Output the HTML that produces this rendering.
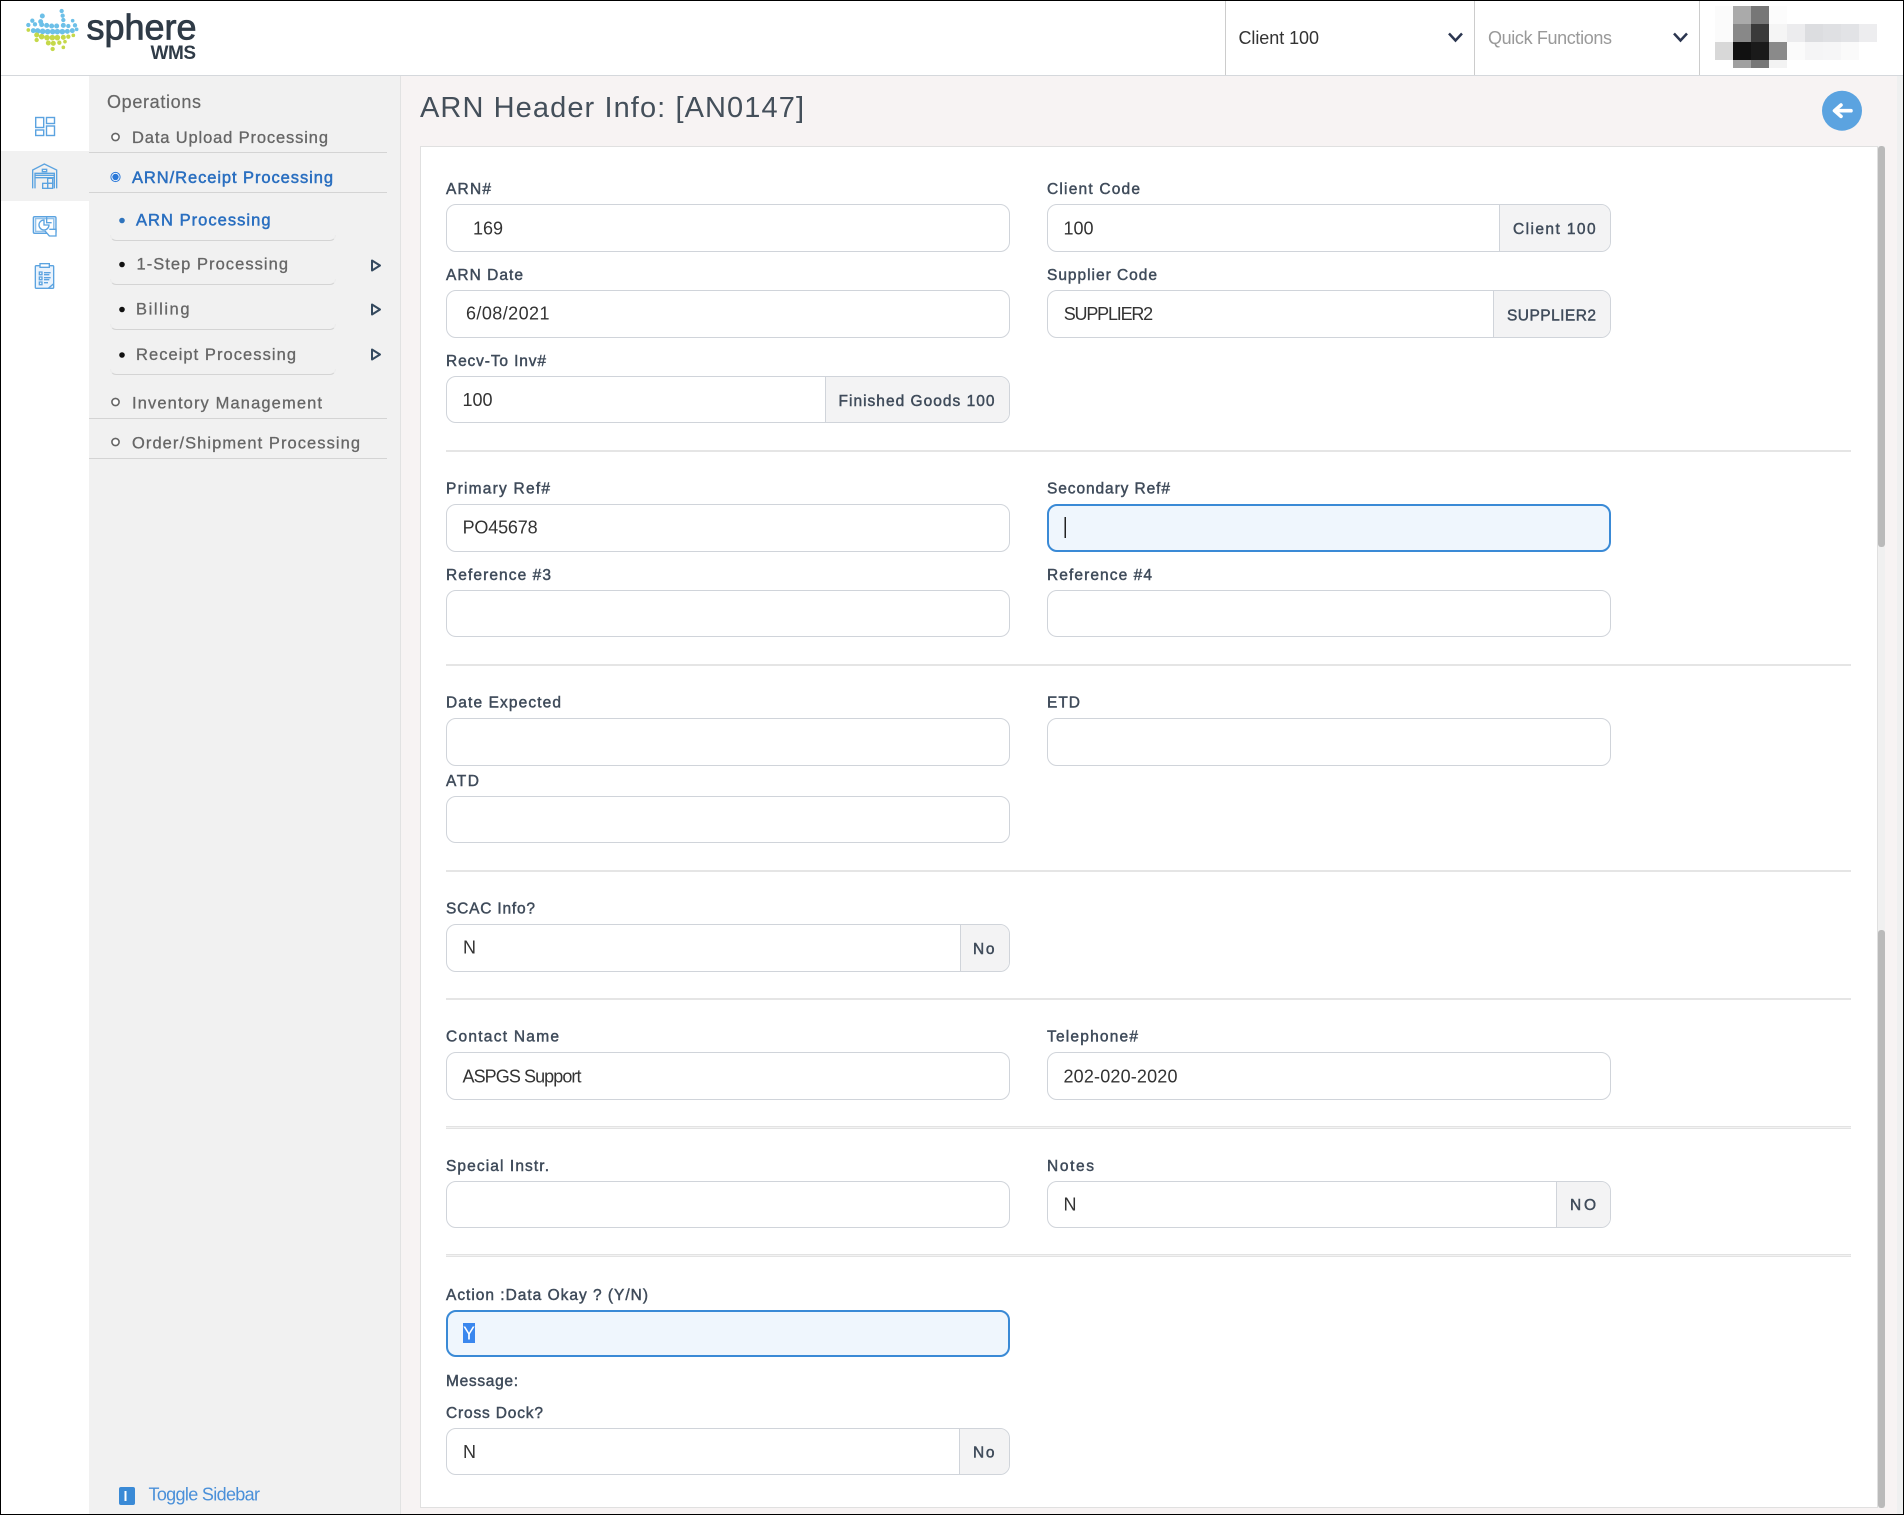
<!DOCTYPE html>
<html lang="en">
<head>
<meta charset="utf-8">
<title>ARN Header Info</title>
<style>
html,body{margin:0;padding:0;background:#f7f3f3}
body{position:relative;width:1904px;height:1515px;overflow:hidden;font-family:"Liberation Sans",sans-serif}
.b{position:absolute;box-sizing:border-box}
.f{position:absolute;box-sizing:border-box;background:#fff;border:1px solid #d0d4da;border-radius:10px;overflow:hidden}
.f i{position:absolute;top:0;bottom:0;right:0;background:#f3f3f4;border-left:1px solid #d0d4da;display:block}
.fo{background:#eff6fd;border:2px solid #3a8ad6}
.d{position:absolute;left:446px;width:1405px;height:2px;background:#e5e5e5}
.d2{height:3px;background:#f2f2f2;border-top:1px solid #e3e3e3;border-bottom:1px solid #e3e3e3;box-sizing:border-box}
.sl{position:absolute;height:1px;background:#d4d4d4}
.sr{position:absolute;left:110px;width:226px;height:6px;border-bottom:1px solid #d4d4d4;border-left:1px solid #ececec;border-right:1px solid #ececec;border-radius:0 0 6px 6px;box-sizing:border-box}
svg{position:absolute;left:0;top:0}
text{font-family:"Liberation Sans",sans-serif}
.l{font-size:15.5px;fill:#3f4b5a;stroke:#3f4b5a;stroke-width:.45px}
.v{font-size:18px;fill:#333}
.s{font-size:16.500px;fill:#666;stroke:#666;stroke-width:.3px}
.sa{font-size:16.500px;fill:#2a6fc0;stroke:#2a6fc0;stroke-width:.5px}
</style>
</head>
<body>
<!-- frame regions -->
<div class="b" style="left:0;top:0;width:1904px;height:76px;background:#fff;border-bottom:1px solid #d5d8dc"></div>
<div class="b" style="left:0;top:76px;width:89px;height:1439px;background:#fff"></div>
<div class="b" style="left:0;top:151px;width:89px;height:50px;background:#f1f1f1"></div>
<div class="b" style="left:89px;top:76px;width:312px;height:1439px;background:#f1f1f1;border-right:1px solid #e2e2e2"></div>
<div class="b" style="left:1897px;top:76px;width:6px;height:1439px;background:#eff0f0"></div>
<div class="b" style="left:1225px;top:1px;width:1px;height:74px;background:#ccc"></div>
<div class="b" style="left:1474px;top:1px;width:1px;height:74px;background:#ccc"></div>
<div class="b" style="left:1699px;top:1px;width:1px;height:74px;background:#ccc"></div>

<!-- sidebar lines -->
<div class="sl" style="left:89px;top:152px;width:298px"></div>
<div class="sl" style="left:89px;top:192px;width:298px"></div>
<div class="sr" style="top:235px"></div>
<div class="sr" style="top:279px"></div>
<div class="sr" style="top:324px"></div>
<div class="sr" style="top:369px"></div>
<div class="sl" style="left:89px;top:418px;width:298px"></div>
<div class="sl" style="left:89px;top:458px;width:298px"></div>

<!-- card -->
<div class="b" style="left:420px;top:146px;width:1458px;height:1362px;background:#fff;border:1px solid #e0e0e0"></div>
<div class="b" style="left:1878px;top:146px;width:7px;height:1362px;background:#f0f0f0"></div>
<div class="b" style="left:1878px;top:146px;width:7px;height:401px;background:#bababa;border-radius:3px"></div>
<div class="b" style="left:1878px;top:930px;width:7px;height:578px;background:#bababa;border-radius:3px"></div>

<!-- dividers -->
<div class="d" style="top:450px"></div>
<div class="d" style="top:664px"></div>
<div class="d" style="top:870px"></div>
<div class="d" style="top:998px"></div>
<div class="d d2" style="top:1126px"></div>
<div class="d d2" style="top:1254px"></div>

<!-- fields -->
<div class="f" style="left:446px;top:204px;width:564px;height:48px"></div>
<div class="f" style="left:1047px;top:204px;width:564px;height:48px"><i style="width:110px"></i></div>
<div class="f" style="left:446px;top:290px;width:564px;height:48px"></div>
<div class="f" style="left:1047px;top:290px;width:564px;height:48px"><i style="width:116px"></i></div>
<div class="f" style="left:446px;top:376px;width:564px;height:47px"><i style="width:183px"></i></div>
<div class="f" style="left:446px;top:504px;width:564px;height:48px"></div>
<div class="f fo" style="left:1047px;top:504px;width:564px;height:48px"></div>
<div class="f" style="left:446px;top:590px;width:564px;height:47px"></div>
<div class="f" style="left:1047px;top:590px;width:564px;height:47px"></div>
<div class="f" style="left:446px;top:718px;width:564px;height:48px"></div>
<div class="f" style="left:1047px;top:718px;width:564px;height:48px"></div>
<div class="f" style="left:446px;top:796px;width:564px;height:47px"></div>
<div class="f" style="left:446px;top:924px;width:564px;height:48px"><i style="width:48px"></i></div>
<div class="f" style="left:446px;top:1052px;width:564px;height:48px"></div>
<div class="f" style="left:1047px;top:1052px;width:564px;height:48px"></div>
<div class="f" style="left:446px;top:1181px;width:564px;height:47px"></div>
<div class="f" style="left:1047px;top:1181px;width:564px;height:47px"><i style="width:53px"></i></div>
<div class="f fo" style="left:446px;top:1310px;width:564px;height:47px"></div>
<div class="f" style="left:446px;top:1428px;width:564px;height:47px"><i style="width:49px"></i></div>

<svg width="1904" height="1515" viewBox="0 0 1904 1515" xmlns="http://www.w3.org/2000/svg">
  <!-- logo -->
  <g transform="scale(.3333)">
    <g fill="#6dc0e8" stroke="#6dc0e8" stroke-width="3">
      <circle cx="185" cy="33" r="5"/><circle cx="188" cy="47" r="5"/><circle cx="127" cy="48" r="6"/>
      <circle cx="190" cy="60" r="5"/><circle cx="97" cy="62" r="5"/><circle cx="122" cy="65" r="6"/><circle cx="218" cy="62" r="4"/>
      <circle cx="85" cy="75" r="5"/><circle cx="105" cy="73" r="5"/><circle cx="125" cy="74" r="6"/><circle cx="140" cy="76" r="6"/><circle cx="155" cy="78" r="6"/><circle cx="170" cy="78" r="6"/><circle cx="190" cy="76" r="6"/><circle cx="205" cy="78" r="5"/><circle cx="225" cy="76" r="5"/>
      <circle cx="100" cy="92" r="6"/><circle cx="113" cy="93" r="7"/><circle cx="128" cy="94" r="7"/><circle cx="143" cy="95" r="7"/><circle cx="158" cy="95" r="7"/><circle cx="172" cy="95" r="7"/><circle cx="187" cy="95" r="7"/><circle cx="202" cy="94" r="6"/><circle cx="217" cy="92" r="6"/><circle cx="230" cy="88" r="4"/>
    </g>
    <g fill="#c5d84a" stroke="#c5d84a" stroke-width="3">
      <circle cx="85" cy="90" r="4"/>
      <circle cx="110" cy="105" r="6"/><circle cx="125" cy="110" r="7"/><circle cx="141" cy="113" r="7"/><circle cx="157" cy="113" r="7"/><circle cx="172" cy="113" r="7"/><circle cx="190" cy="112" r="6"/><circle cx="205" cy="110" r="5"/><circle cx="220" cy="106" r="4"/>
      <circle cx="110" cy="120" r="5"/><circle cx="145" cy="129" r="6"/><circle cx="160" cy="130" r="6"/><circle cx="178" cy="128" r="5"/><circle cx="195" cy="125" r="4"/>
      <circle cx="158" cy="147" r="5"/><circle cx="190" cy="142" r="4"/>
    </g>
  </g>
  <text x="86.500" y="39.500" textLength="110" style="font-size:36px;fill:#2f3b47;stroke:#2f3b47;stroke-width:.8px">sphere</text>
  <text x="150.500" y="59" textLength="45.500" style="font-size:19px;font-weight:bold;fill:#2f3b47">WMS</text>

  <!-- rail icons -->
  <g fill="none" stroke="#5ba3e0" stroke-width="1.4">
    <rect x="35.700" y="117.500" width="8" height="10"/><rect x="46.500" y="117.500" width="8" height="6"/>
    <rect x="35.700" y="130" width="8" height="5.500"/><rect x="46.500" y="126" width="8" height="9.500"/>
  </g>
  <g transform="translate(20,100) scale(.3333)" fill="none" stroke="#5ba3e0" stroke-width="4">
    <path d="M38 265V210L73 192L110 210V265"/>
    <path d="M45 265V220H103V265M45 226H103M45 233H103"/>
    <rect x="67" y="208" width="13" height="7"/>
    <rect x="68" y="250" width="15" height="15"/><rect x="83" y="250" width="15" height="15"/><rect x="83" y="235" width="15" height="15"/>
  </g>
  <g transform="translate(20,100) scale(.3333)" fill="none" stroke="#5ba3e0" stroke-width="4">
    <rect x="40" y="350" width="68" height="50" rx="4" fill="#dcebf9"/>
    <rect x="47" y="356" width="54" height="38" fill="#fff" stroke-opacity=".6"/>
    <path d="M72 360A15 15 0 1 0 87 375H72Z"/>
    <path d="M80 352V368H95"/>
    <path d="M75 393L88 408H108V388H88" fill="#fff"/>
  </g>
  <g transform="translate(20,100) scale(.3333)" fill="none" stroke="#5ba3e0" stroke-width="4">
    <rect x="46" y="497" width="55" height="68" rx="3" fill="#eaf3fc"/>
    <rect x="60" y="491" width="28" height="11" fill="#fff"/>
    <path d="M58 516h8v8h-8zM58 531h8v8h-8zM58 546h8v8h-8zM72 518h20M72 524h16M72 533h20M72 539h16M72 548h12"/>
    <path d="M85 565L100 552"/>
  </g>

  <!-- sidebar -->
  <text x="107" y="108" textLength="94" style="font-size:18px;fill:#666;stroke:#666;stroke-width:.2px">Operations</text>
  <circle cx="115.500" cy="137" r="3.600" fill="#fff" stroke="#666" stroke-width="1.600"/>
  <text class="s" x="132" y="143" textLength="196">Data Upload Processing</text>
  <circle cx="115.500" cy="177" r="4.600" fill="#fff" stroke="#2a78d8" stroke-width="1"/>
  <circle cx="115.500" cy="177" r="3.200" fill="#2a78d8"/>
  <text class="sa" x="132" y="183" textLength="201">ARN/Receipt Processing</text>
  <circle cx="122" cy="220.500" r="2.800" fill="#2f74bd"/>
  <text class="sa" x="136" y="225.500" textLength="134.500">ARN Processing</text>
  <circle cx="122" cy="264.500" r="2.800" fill="#111"/>
  <text class="s" x="136.500" y="269.500" textLength="151.500">1-Step Processing</text>
  <circle cx="122" cy="309.500" r="2.800" fill="#111"/>
  <text class="s" x="136" y="314.500" textLength="53.500">Billing</text>
  <circle cx="122" cy="355" r="2.800" fill="#111"/>
  <text class="s" x="136" y="360" textLength="160">Receipt Processing</text>
  <circle cx="115.500" cy="402" r="3.600" fill="#fff" stroke="#666" stroke-width="1.600"/>
  <text class="s" x="132" y="408.500" textLength="190">Inventory Management</text>
  <circle cx="115.500" cy="442" r="3.600" fill="#fff" stroke="#666" stroke-width="1.600"/>
  <text class="s" x="132" y="448.500" textLength="228">Order/Shipment Processing</text>
  <g fill="#f1f1f1" stroke="#34495e" stroke-width="2" stroke-linejoin="round">
    <path d="M372 260.500V270.500L380 265.500Z"/>
    <path d="M372 304.500V314.500L380 309.500Z"/>
    <path d="M372 349.500V359.500L380 354.500Z"/>
  </g>
  <rect x="119" y="1487" width="16" height="18" rx="2" fill="#3a8ad6"/>
  <rect x="124.500" y="1491" width="2" height="10" fill="#fff"/>
  <text x="148.500" y="1500.500" textLength="111.500" style="font-size:18px;fill:#4a90d9">Toggle Sidebar</text>

  <!-- header right -->
  <text class="v" x="1238.500" y="44" textLength="80.500">Client 100</text>
  <text x="1488" y="44" textLength="124" style="font-size:18px;fill:#999">Quick Functions</text>
  <g fill="none" stroke="#2b3650" stroke-width="2.500">
    <path d="M1449 33.500L1455.500 40.500L1462 33.500"/>
    <path d="M1674 33.500L1680.500 40.500L1687 33.500"/>
  </g>
  <!-- pixelated avatar -->
  <g shape-rendering="crispEdges">
    <rect x="1715" y="6" width="18" height="18" fill="#fbfbfb"/><rect x="1733" y="6" width="18" height="18" fill="#aaa"/><rect x="1751" y="6" width="18" height="18" fill="#777"/><rect x="1769" y="6" width="18" height="18" fill="#fcfcfc"/>
    <rect x="1715" y="24" width="18" height="18" fill="#fbfbfb"/><rect x="1733" y="24" width="18" height="18" fill="#888"/><rect x="1751" y="24" width="18" height="18" fill="#3a3a3a"/><rect x="1769" y="24" width="18" height="18" fill="#f5f5f5"/><rect x="1787" y="24" width="18" height="18" fill="#ececee"/><rect x="1805" y="24" width="18" height="18" fill="#dcdde0"/><rect x="1823" y="24" width="18" height="18" fill="#dfe0e3"/><rect x="1841" y="24" width="18" height="18" fill="#e2e3e6"/><rect x="1859" y="24" width="18" height="18" fill="#ededef"/>
    <rect x="1715" y="42" width="18" height="18" fill="#d8d8d8"/><rect x="1733" y="42" width="18" height="18" fill="#111"/><rect x="1751" y="42" width="18" height="18" fill="#1a1a1a"/><rect x="1769" y="42" width="18" height="18" fill="#8a8a8a"/><rect x="1787" y="42" width="18" height="18" fill="#fbfbfb"/><rect x="1805" y="42" width="18" height="18" fill="#f5f5f6"/><rect x="1823" y="42" width="18" height="18" fill="#f6f6f7"/><rect x="1841" y="42" width="18" height="18" fill="#fafafa"/>
    <rect x="1733" y="60" width="18" height="8" fill="#a0a0a0"/><rect x="1751" y="60" width="18" height="8" fill="#777"/><rect x="1769" y="60" width="18" height="8" fill="#f3f3f3"/>
  </g>

  <!-- title + back -->
  <text x="420" y="117" textLength="384" style="font-size:29px;fill:#444f5a">ARN Header Info: [AN0147]</text>
  <circle cx="1842" cy="110.700" r="20" fill="#5ba3e0"/>
  <path d="M1851 110.700H1835M1841 105L1834.500 110.700L1841 116.400" fill="none" stroke="#fff" stroke-width="3.600" stroke-linecap="round" stroke-linejoin="round"/>

  <!-- labels -->
  <text class="l" x="446" y="194" textLength="45">ARN#</text>
  <text class="l" x="446" y="280" textLength="77">ARN Date</text>
  <text class="l" x="446" y="366" textLength="100">Recv-To Inv#</text>
  <text class="l" x="1047" y="194" textLength="93">Client Code</text>
  <text class="l" x="1047" y="280" textLength="110">Supplier Code</text>
  <text class="l" x="446" y="493.500" textLength="104">Primary Ref#</text>
  <text class="l" x="1047" y="493.500" textLength="123">Secondary Ref#</text>
  <text class="l" x="446" y="580" textLength="105">Reference #3</text>
  <text class="l" x="1047" y="580" textLength="105">Reference #4</text>
  <text class="l" x="446" y="707.500" textLength="115">Date Expected</text>
  <text class="l" x="1047" y="707.500" textLength="33">ETD</text>
  <text class="l" x="446" y="786" textLength="33">ATD</text>
  <text class="l" x="446" y="913.500" textLength="89">SCAC Info?</text>
  <text class="l" x="446" y="1041.500" textLength="113">Contact Name</text>
  <text class="l" x="1047" y="1041.500" textLength="91">Telephone#</text>
  <text class="l" x="446" y="1171" textLength="103">Special Instr.</text>
  <text class="l" x="1047" y="1171" textLength="47">Notes</text>
  <text class="l" x="446" y="1300" textLength="202">Action :Data Okay ? (Y/N)</text>
  <text class="l" x="446" y="1386" textLength="72">Message:</text>
  <text class="l" x="446" y="1418" textLength="97">Cross Dock?</text>

  <!-- values -->
  <text class="v" x="473" y="234.500" textLength="30">169</text>
  <text class="v" x="466" y="319.500" textLength="83.500">6/08/2021</text>
  <text class="v" x="462.500" y="406" textLength="30">100</text>
  <text class="v" x="1063.500" y="234.500" textLength="30">100</text>
  <text class="v" x="1063.700" y="320" textLength="89.500">SUPPLIER2</text>
  <text class="v" x="462.600" y="533.500" textLength="75">PO45678</text>
  <text class="v" x="463" y="953.500">N</text>
  <text class="v" x="462.500" y="1082.500" textLength="119">ASPGS Support</text>
  <text class="v" x="1063.500" y="1082.500" textLength="114">202-020-2020</text>
  <text class="v" x="1063.500" y="1210.500">N</text>
  <text class="v" x="463" y="1458">N</text>
  <rect x="1064.500" y="517" width="1.500" height="21" fill="#222"/>
  <rect x="463" y="1323" width="12" height="20" fill="#3a87ee"/>
  <text x="463" y="1339.500" style="font-size:18px;fill:#fff">Y</text>

  <!-- addons -->
  <text class="l" x="1513" y="234" textLength="82.600">Client 100</text>
  <text class="l" x="1507" y="320.500" textLength="89">SUPPLIER2</text>
  <text class="l" x="838.500" y="406" textLength="156">Finished Goods 100</text>
  <text class="l" x="973" y="954" textLength="21.500">No</text>
  <text class="l" x="973" y="1457.500" textLength="21.500">No</text>
  <text class="l" x="1570" y="1210" textLength="26">NO</text>
</svg>

<!-- black outer frame -->
<div class="b" style="left:0;top:0;width:1904px;height:1515px;border:1px solid #000;pointer-events:none"></div>
</body>
</html>
